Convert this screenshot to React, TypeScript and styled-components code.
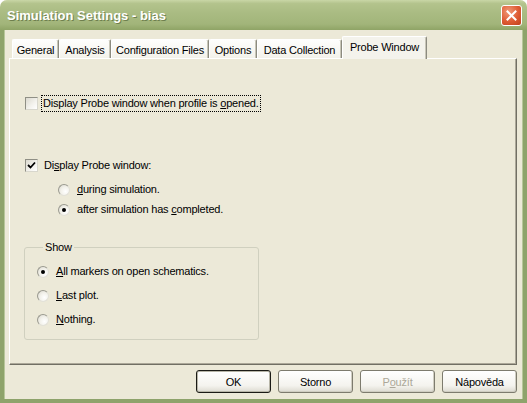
import { FC, ReactNode } from 'react'
import styled, { createGlobalStyle, css } from 'styled-components'

const GlobalStyle = createGlobalStyle`
  html, body {
    margin: 0;
    padding: 0;
    background: #ffffff;
  }
  body {
    font-family: "Liberation Sans", Arial, sans-serif;
    font-size: 11px;
    color: #000;
  }
`

const Window = styled.div`
  width: 527px;
  height: 403px;
  display: flex;
  flex-direction: column;
  background: #ece9d8;
  border-radius: 7px 7px 0 0;
  overflow: hidden;
`

const TitleBar = styled.div`
  flex: none;
  height: 30px;
  display: flex;
  align-items: center;
  justify-content: space-between;
  padding: 0 5px 0 7px;
  box-sizing: border-box;
  background: linear-gradient(#c9d6a6 0%, #b3c38c 12%, #a9bb82 45%, #a2b57a 80%, #8fa466 100%);
`

const Title = styled.span`
  font-family: "Liberation Sans", Arial, sans-serif;
  font-weight: bold;
  font-size: 13px;
  color: #ffffff;
  text-shadow: 1px 1px 0 #6e7f4e;
  margin-top: 1px;
`

const CloseButton = styled.div`
  width: 21px;
  height: 21px;
  box-sizing: border-box;
  border: 1px solid #ffffff;
  border-radius: 3px;
  background: radial-gradient(circle at 35% 30%, #f09a78 0%, #de5b33 55%, #c0401d 100%);
  display: flex;
  align-items: center;
  justify-content: center;
  margin-top: 1px;
`

const Frame = styled.div`
  flex: 1;
  display: flex;
  flex-direction: column;
  border: 4px solid #8ea36b;
  border-top: 0;
  padding: 5px 6px 0 5px;
  box-shadow: inset 1px 0 0 #b7c69a, inset -1px 0 0 #b7c69a;
`

const TabStrip = styled.div`
  display: flex;
  align-items: flex-end;
  height: 23px;
  padding-left: 3px;
  position: relative;
  z-index: 1;
`

const Tab = styled.div<{ $w: number; $active?: boolean }>`
  width: ${({ $w }) => $w}px;
  height: 19px;
  box-sizing: border-box;
  display: flex;
  align-items: center;
  justify-content: center;
  white-space: nowrap;
  letter-spacing: -0.2px;
  background: linear-gradient(#fefefd, #f3f2ea);
  border-top: 1px solid #ffffff;
  border-left: 1px solid #ffffff;
  border-right: 1px solid #8c8b80;
  box-shadow: inset -1px 0 0 #c8c6b8;
  border-radius: 2px 2px 0 0;
  padding-top: 1px;

  ${({ $active }) =>
    $active &&
    css`
      height: 23px;
      margin: 0 0 -1px 0;
      padding-top: 0;
      padding-bottom: 2px;
      background: #f4f3ec;
      border-top: 1px solid #ffffff;
      border-left: 1px solid #ffffff;
      position: relative;
      z-index: 2;
    `}
`

const Panel = styled.div`
  flex: none;
  height: 307px;
  box-sizing: border-box;
  border-top: 1px solid #ffffff;
  border-left: 1px solid #ffffff;
  border-right: 1px solid #716f64;
  border-bottom: 1px solid #716f64;
  box-shadow: inset -1px -1px 0 #aca899;
  padding: 36px 0 0 15px;
  display: flex;
  flex-direction: column;
  align-items: flex-start;
`

const Row = styled.div<{ $top?: number; $indent?: number }>`
  display: flex;
  align-items: center;
  height: 17px;
  margin-top: ${({ $top }) => $top ?? 0}px;
  margin-left: ${({ $indent }) => $indent ?? 0}px;
  letter-spacing: -0.2px;
  white-space: nowrap;
`

const Label = styled.span<{ $focused?: boolean }>`
  margin-left: 5px;
  padding: 1px 1px;
  border: 1px dotted transparent;
  line-height: 13px;
  ${({ $focused }) =>
    $focused &&
    css`
      border-color: #000;
    `}
`

const Box = styled.span`
  width: 13px;
  height: 13px;
  box-sizing: border-box;
  border: 1px solid #8f8f85;
  border-right-color: #d8d7cd;
  border-bottom-color: #d8d7cd;
  background: linear-gradient(135deg, #dcdad0 0%, #f4f3ee 60%, #ffffff 100%);
  display: flex;
  align-items: center;
  justify-content: center;
  flex: none;
`

const Circle = styled.span`
  width: 12px;
  height: 12px;
  box-sizing: border-box;
  border-radius: 50%;
  border: 1px solid #9a9a90;
  border-right-color: #e2e1d8;
  border-bottom-color: #e2e1d8;
  background: radial-gradient(circle at 65% 65%, #ffffff 0%, #f2f1ea 50%, #d6d4ca 100%);
  display: flex;
  align-items: center;
  justify-content: center;
  flex: none;
`

const Dot = styled.span`
  width: 4px;
  height: 4px;
  border-radius: 50%;
  background: #000;
`

const Group = styled.fieldset`
  margin: 22px 0 0 -1px;
  width: 235px;
  box-sizing: border-box;
  border: 1px solid #d0d0bf;
  border-radius: 3px;
  padding: 9px 0 11px 12px;
  display: flex;
  flex-direction: column;
  gap: 7px;
  min-inline-size: 0;
`

const Legend = styled.legend`
  padding: 0 2px;
  margin-left: 6px;
  line-height: 14px;
  letter-spacing: -0.2px;
`

const ButtonRow = styled.div`
  display: flex;
  justify-content: flex-end;
  gap: 7px;
  margin-top: 5px;
`

const Button = styled.div<{ $default?: boolean; $disabled?: boolean }>`
  width: 75px;
  height: 23px;
  box-sizing: border-box;
  display: flex;
  align-items: center;
  justify-content: center;
  border: 1px solid #7d7b6e;
  border-radius: 3px;
  background: linear-gradient(#ffffff 0%, #f4f3ee 70%, #dcdad0 100%);
  box-shadow: inset -1px -1px 0 #d0cec2;
  letter-spacing: -0.2px;
  color: ${({ $disabled }) => ($disabled ? '#aca899' : '#000')};

  ${({ $default }) =>
    $default &&
    css`
      border-color: #1b1b16;
      box-shadow: inset 0 0 0 1px #b8b6a8;
    `}
`

const U = styled.span`
  text-decoration: underline;
  text-underline-offset: 1px;
`

const CheckBox: FC<{ checked?: boolean; focused?: boolean; children: ReactNode; top?: number; indent?: number }> = ({
  checked,
  focused,
  children,
  top,
  indent,
}) => (
  <Row $top={top} $indent={indent}>
    <Box>
      {checked && (
        <svg width="9" height="9" viewBox="0 0 9 9">
          <path d="M1 4 L3.5 6.5 L8 1.5" fill="none" stroke="#000" strokeWidth="1.8" />
        </svg>
      )}
    </Box>
    <Label $focused={focused} style={{ marginLeft: focused ? 3 : 4 }}>
      {children}
    </Label>
  </Row>
)

const Radio: FC<{ checked?: boolean; children: ReactNode; top?: number; indent?: number }> = ({
  checked,
  children,
  top,
  indent,
}) => (
  <Row $top={top} $indent={indent}>
    <Circle>{checked && <Dot />}</Circle>
    <Label>{children}</Label>
  </Row>
)

const tabs = [
  { label: 'General', w: 47 },
  { label: 'Analysis', w: 52 },
  { label: 'Configuration Files', w: 98 },
  { label: 'Options', w: 48 },
  { label: 'Data Collection', w: 85 },
  { label: 'Probe Window', w: 85, active: true },
]

export default function App() {
  return (
    <>
      <GlobalStyle />
      <Window>
        <TitleBar>
          <Title>Simulation Settings - bias</Title>
          <CloseButton>
            <svg width="11" height="11" viewBox="0 0 11 11">
              <path d="M1.5 1.5 L9.5 9.5 M9.5 1.5 L1.5 9.5" stroke="#fff" strokeWidth="2" strokeLinecap="square" />
            </svg>
          </CloseButton>
        </TitleBar>
        <Frame>
          <TabStrip>
            {tabs.map((t) => (
              <Tab key={t.label} $w={t.w} $active={t.active}>
                {t.label}
              </Tab>
            ))}
          </TabStrip>
          <Panel>
            <CheckBox focused>
              Display Probe window when profile is <U>o</U>pened.
            </CheckBox>
            <CheckBox checked top={45}>
              Di<U>s</U>play Probe window:
            </CheckBox>
            <Radio top={7} indent={33}>
              <U>d</U>uring simulation.
            </Radio>
            <Radio checked top={3} indent={33}>
              after simulation has <U>c</U>ompleted.
            </Radio>
            <Group>
              <Legend>Show</Legend>
              <Radio checked>
                <U>A</U>ll markers on open schematics.
              </Radio>
              <Radio>
                <U>L</U>ast plot.
              </Radio>
              <Radio>
                <U>N</U>othing.
              </Radio>
            </Group>
          </Panel>
          <ButtonRow>
            <Button $default>OK</Button>
            <Button>Storno</Button>
            <Button $disabled>
              P<U>o</U>užít
            </Button>
            <Button>Nápověda</Button>
          </ButtonRow>
        </Frame>
      </Window>
    </>
  )
}
